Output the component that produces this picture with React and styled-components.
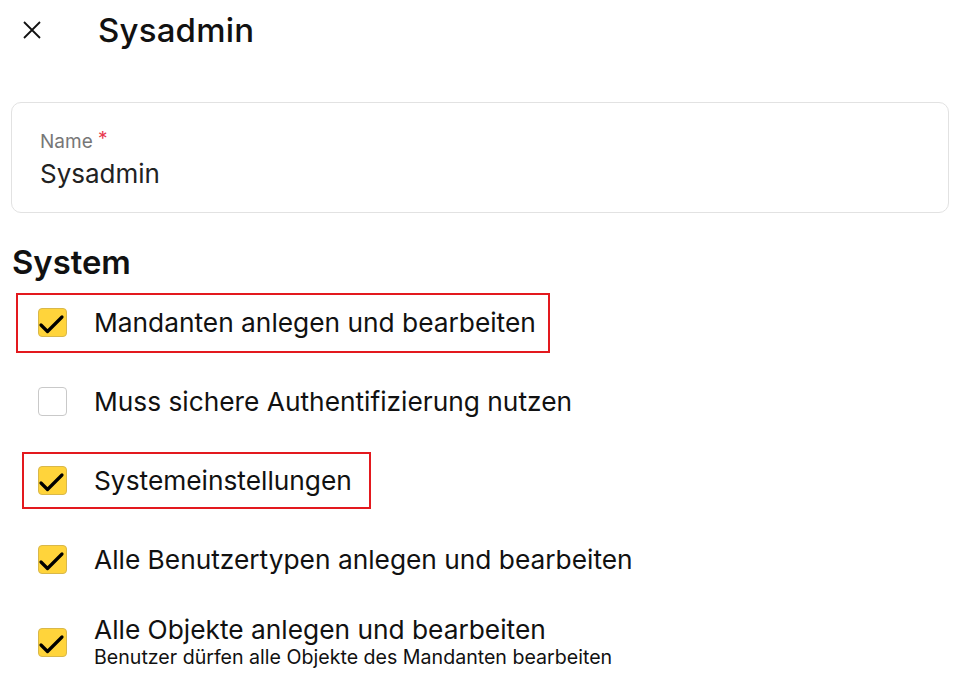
import React from 'react';
import styled, { createGlobalStyle } from 'styled-components';

const GlobalStyle = createGlobalStyle`
    body {
        margin: 0;
        background: #fff;
        font-family: Inter, "Noto Sans", sans-serif;
        color: #111;
    }
`;

const permissions = [
    { label: 'Mandanten anlegen und bearbeiten', checked: true, mark: { left: -22, right: -14, top: -15, bottom: -15 } },
    { label: 'Muss sichere Authentifizierung nutzen', checked: false },
    { label: 'Systemeinstellungen', checked: true, mark: { left: -16, right: -19, top: -14, bottom: -13 } },
    { label: 'Alle Benutzertypen anlegen und bearbeiten', checked: true },
    { label: 'Alle Objekte anlegen und bearbeiten', checked: true, hint: 'Benutzer dürfen alle Objekte des Mandanten bearbeiten' },
];

function Checkbox({ checked }) {
    return (
        <Box checked={checked}>
            {checked && (
                <svg width="28" height="24" viewBox="0 0 28 24">
                    <path d="M3 13 L9.5 19.5 L24 5" fill="none" stroke="#000" strokeWidth="3.2" strokeLinecap="round" strokeLinejoin="round" />
                </svg>
            )}
        </Box>
    );
}

function App() {
    return (
        <Page>
            <GlobalStyle />
            <Header>
                <CloseButton aria-label="Schließen">
                    <svg width="20" height="20" viewBox="0 0 20 20">
                        <path d="M2 2 L18 18 M18 2 L2 18" stroke="#111" strokeWidth="1.8" />
                    </svg>
                </CloseButton>
                <Title>Sysadmin</Title>
            </Header>
            <Content>
                <Field>
                    <FieldLabel>Name <Required>*</Required></FieldLabel>
                    <FieldValue>Sysadmin</FieldValue>
                </Field>
                <Section>System</Section>
                <List>
                    {permissions.map(p => (
                        <Row key={p.label} tall={!!p.hint}>
                            <Item mark={p.mark}>
                                <Checkbox checked={p.checked} />
                                <Texts>
                                    <Label>{p.label}</Label>
                                    {p.hint && <Hint>{p.hint}</Hint>}
                                </Texts>
                            </Item>
                        </Row>
                    ))}
                </List>
            </Content>
        </Page>
    );
}

const Page = styled.div`
    width: 963px;
    min-height: 679px;
`;

const Header = styled.div`
    display: flex;
    align-items: center;
    height: 60px;
    padding-left: 22px;
`;

const CloseButton = styled.button`
    display: flex;
    align-items: center;
    justify-content: center;
    width: 20px;
    height: 20px;
    padding: 0;
    border: 0;
    background: none;
    margin-right: 56px;
`;

const Title = styled.h1`
    margin: 0;
    font-size: 33px;
    font-weight: 500;
    letter-spacing: 0.2px;
`;

const Content = styled.div`
    padding: 42px 14px 0 11px;
`;

const Field = styled.div`
    border: 1px solid #e2e2e2;
    border-radius: 10px;
    height: 111px;
    padding: 23px 28px 0;
    box-sizing: border-box;
`;

const FieldLabel = styled.div`
    font-size: 19px;
    color: #777;
    line-height: 26px;
`;

const Required = styled.span`
    color: #e8384f;
    vertical-align: 3px;
`;

const FieldValue = styled.div`
    font-size: 26px;
    color: #222;
    line-height: 34px;
    margin-top: 2px;
`;

const Section = styled.h2`
    margin: 28px 0 0 1px;
    font-size: 32.8px;
    font-weight: 600;
    line-height: 42px;
`;

const List = styled.div`
    display: flex;
    flex-direction: column;
    margin-top: 0;
`;

const Row = styled.div`
    height: ${({ tall }) => (tall ? 86 : 79)}px;
    display: flex;
    align-items: center;
`;

const Item = styled.div`
    position: relative;
    display: flex;
    align-items: center;
    gap: 27px;
    padding-left: 27px;
    ${({ mark }) => mark && `
        &::after {
            content: '';
            position: absolute;
            top: ${mark.top}px;
            bottom: ${mark.bottom}px;
            left: ${27 + mark.left}px;
            right: ${mark.right}px;
            border: 2px solid #e3191e;
        }
    `}
`;

const Box = styled.span`
    flex: none;
    width: 29px;
    height: 29px;
    box-sizing: border-box;
    border-radius: 4px;
    border: 1px solid ${({ checked }) => (checked ? '#d9b84a' : '#c9c9c9')};
    background: ${({ checked }) => (checked ? '#ffd43b' : '#fff')};
    display: flex;
    align-items: center;
    justify-content: center;
    svg {
        margin-left: -1px;
        margin-top: 3px;
    }
`;

const Texts = styled.div`
    display: flex;
    flex-direction: column;
`;

const Label = styled.div`
    font-size: 26.3px;
    line-height: 30px;
`;

const Hint = styled.div`
    font-size: 19.6px;
    line-height: 25px;
`;

export default App;
